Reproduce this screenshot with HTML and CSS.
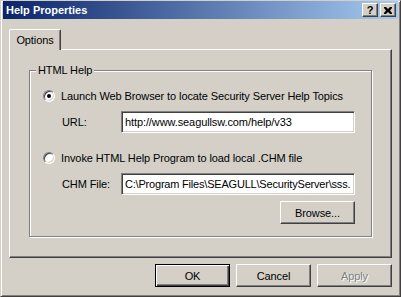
FILE: index.html
```html
<!DOCTYPE html>
<html lang="en">
<head>
    <meta charset="UTF-8">
    <title>Help Properties</title>
    <link rel="stylesheet" href="styles.css">
</head>
<body>
    <div class="window">
        <div class="titlebar">
            <span class="title">Help Properties</span>
            <div class="title-buttons">
                <span class="tbtn">?</span>
                <span class="tbtn">
                    <svg width="8" height="7" viewBox="0 0 8 7"><path d="M0 0h2l2 2 2-2h2v1L6 3.5 8 6v1H6L4 5 2 7H0V6l2-2.5L0 1z" fill="#000"/></svg>
                </span>
            </div>
        </div>

        <div class="content">
            <div class="tabs">
                <div class="tab active">Options</div>
            </div>

            <div class="panel">
                <div class="group">
                    <span class="group-label">HTML Help</span>

                    <div class="option">
                        <span class="radio checked"></span>
                        <span>Launch Web Browser to locate Security Server Help Topics</span>
                    </div>
                    <div class="field-row">
                        <span class="field-label">URL:</span>
                        <div class="textbox">http://www.seagullsw.com/help/v33</div>
                    </div>

                    <div class="option second">
                        <span class="radio"></span>
                        <span>Invoke HTML Help Program to load local .CHM file</span>
                    </div>
                    <div class="field-row">
                        <span class="field-label">CHM File:</span>
                        <div class="textbox tight">C:\Program Files\SEAGULL\SecurityServer\sss.</div>
                    </div>

                    <div class="browse-row">
                        <span class="btn">Browse...</span>
                    </div>
                </div>
            </div>

            <div class="buttons">
                <span class="btn default">OK</span>
                <span class="btn">Cancel</span>
                <span class="btn disabled">Apply</span>
            </div>
        </div>
    </div>
</body>
</html>
```

FILE: styles.css
```css
* {
    margin: 0;
    padding: 0;
    box-sizing: border-box;
}

body {
    font-family: 'Liberation Sans', Arial, sans-serif;
    font-size: 11px;
    letter-spacing: -0.1px;
    color: #000;
    background: #d4d0c8;
}

.window {
    width: 401px;
    height: 297px;
    background: #d4d0c8;
    border-top: 1px solid #d4d0c8;
    border-left: 1px solid #d4d0c8;
    border-right: 1px solid #404040;
    border-bottom: 1px solid #404040;
    box-shadow: inset 1px 1px 0 #fff, inset -1px -1px 0 #808080;
    padding: 0 2px 2px 2px;
}

.titlebar {
    height: 18px;
    background: linear-gradient(90deg, #0a246a 0%, #a6caf0 100%);
    display: flex;
    align-items: center;
    justify-content: space-between;
    padding: 0 2px 0 2px;
}

.title {
    color: #fff;
    font-weight: bold;
    font-size: 11px;
    letter-spacing: 0;
    padding-left: 1px;
}

.title-buttons {
    display: flex;
    gap: 2px;
}

.tbtn {
    width: 16px;
    height: 14px;
    background: #d4d0c8;
    border-top: 1px solid #fff;
    border-left: 1px solid #fff;
    border-right: 1px solid #404040;
    border-bottom: 1px solid #404040;
    box-shadow: inset -1px -1px 0 #808080;
    display: flex;
    align-items: center;
    justify-content: center;
    font-weight: bold;
    font-size: 11px;
    line-height: 1;
}

.content {
    padding: 10px 6px 0 6px;
}

.tabs {
    display: flex;
    height: 20px;
    position: relative;
    z-index: 1;
}

.tab {
    width: 52px;
    height: 21px;
    background: #d4d0c8;
    border-top: 1px solid #fff;
    border-left: 1px solid #fff;
    border-right: 1px solid #404040;
    border-radius: 2px 2px 0 0;
    box-shadow: inset -1px 0 0 #808080;
    text-align: center;
    padding-top: 4px;
}

.panel {
    width: 383px;
    height: 209px;
    border-top: 1px solid #fff;
    border-left: 1px solid #fff;
    border-right: 1px solid #404040;
    border-bottom: 1px solid #404040;
    box-shadow: inset -1px -1px 0 #808080;
    padding: 20px 0 0 19px;
}

.group {
    position: relative;
    width: 343px;
    height: 167px;
    border: 1px solid #808080;
    box-shadow: inset 1px 1px 0 #fff, 1px 1px 0 #fff;
    padding: 18px 16px 0 13px;
}

.group-label {
    position: absolute;
    top: -8px;
    left: 6px;
    background: #d4d0c8;
    padding: 0 2px;
    line-height: 14px;
}

.option {
    display: flex;
    align-items: center;
    gap: 6px;
    height: 13px;
}

.option.second {
    margin-top: 18px;
}

.radio {
    width: 12px;
    height: 12px;
    border-radius: 50%;
    background: #fff;
    border-top: 1px solid #808080;
    border-left: 1px solid #808080;
    border-right: 1px solid #fff;
    border-bottom: 1px solid #fff;
    box-shadow: inset 1px 1px 0 #404040, inset -1px -1px 0 #d4d0c8;
    display: flex;
    align-items: center;
    justify-content: center;
    flex-shrink: 0;
}

.radio.checked::after {
    content: '';
    width: 4px;
    height: 4px;
    border-radius: 50%;
    background: #000;
}

.field-row {
    display: flex;
    align-items: center;
    margin-top: 9px;
}

.field-label {
    width: 59px;
    padding-left: 19px;
    box-sizing: content-box;
}

.textbox {
    width: 234px;
    height: 22px;
    background: #fff;
    border-top: 1px solid #808080;
    border-left: 1px solid #808080;
    border-right: 1px solid #fff;
    border-bottom: 1px solid #fff;
    box-shadow: inset 1px 1px 0 #404040, inset -1px -1px 0 #d4d0c8;
    padding: 0 1px 0 3px;
    line-height: 20px;
    white-space: nowrap;
    overflow: hidden;
}

.textbox.tight {
    letter-spacing: -0.2px;
}

.browse-row {
    display: flex;
    justify-content: flex-end;
    margin-top: 6px;
}

.btn {
    width: 75px;
    height: 23px;
    background: #d4d0c8;
    border-top: 1px solid #fff;
    border-left: 1px solid #fff;
    border-right: 1px solid #404040;
    border-bottom: 1px solid #404040;
    box-shadow: inset -1px -1px 0 #808080;
    display: flex;
    align-items: center;
    justify-content: center;
}

.btn.default {
    border: 1px solid #000;
    box-shadow: inset 1px 1px 0 #fff, inset -1px -1px 0 #404040, inset -2px -2px 0 #808080;
}

.btn.disabled {
    color: #808080;
    text-shadow: 1px 1px 0 #fff;
}

.buttons {
    display: flex;
    justify-content: flex-end;
    gap: 6px;
    margin-top: 6px;
}
```
